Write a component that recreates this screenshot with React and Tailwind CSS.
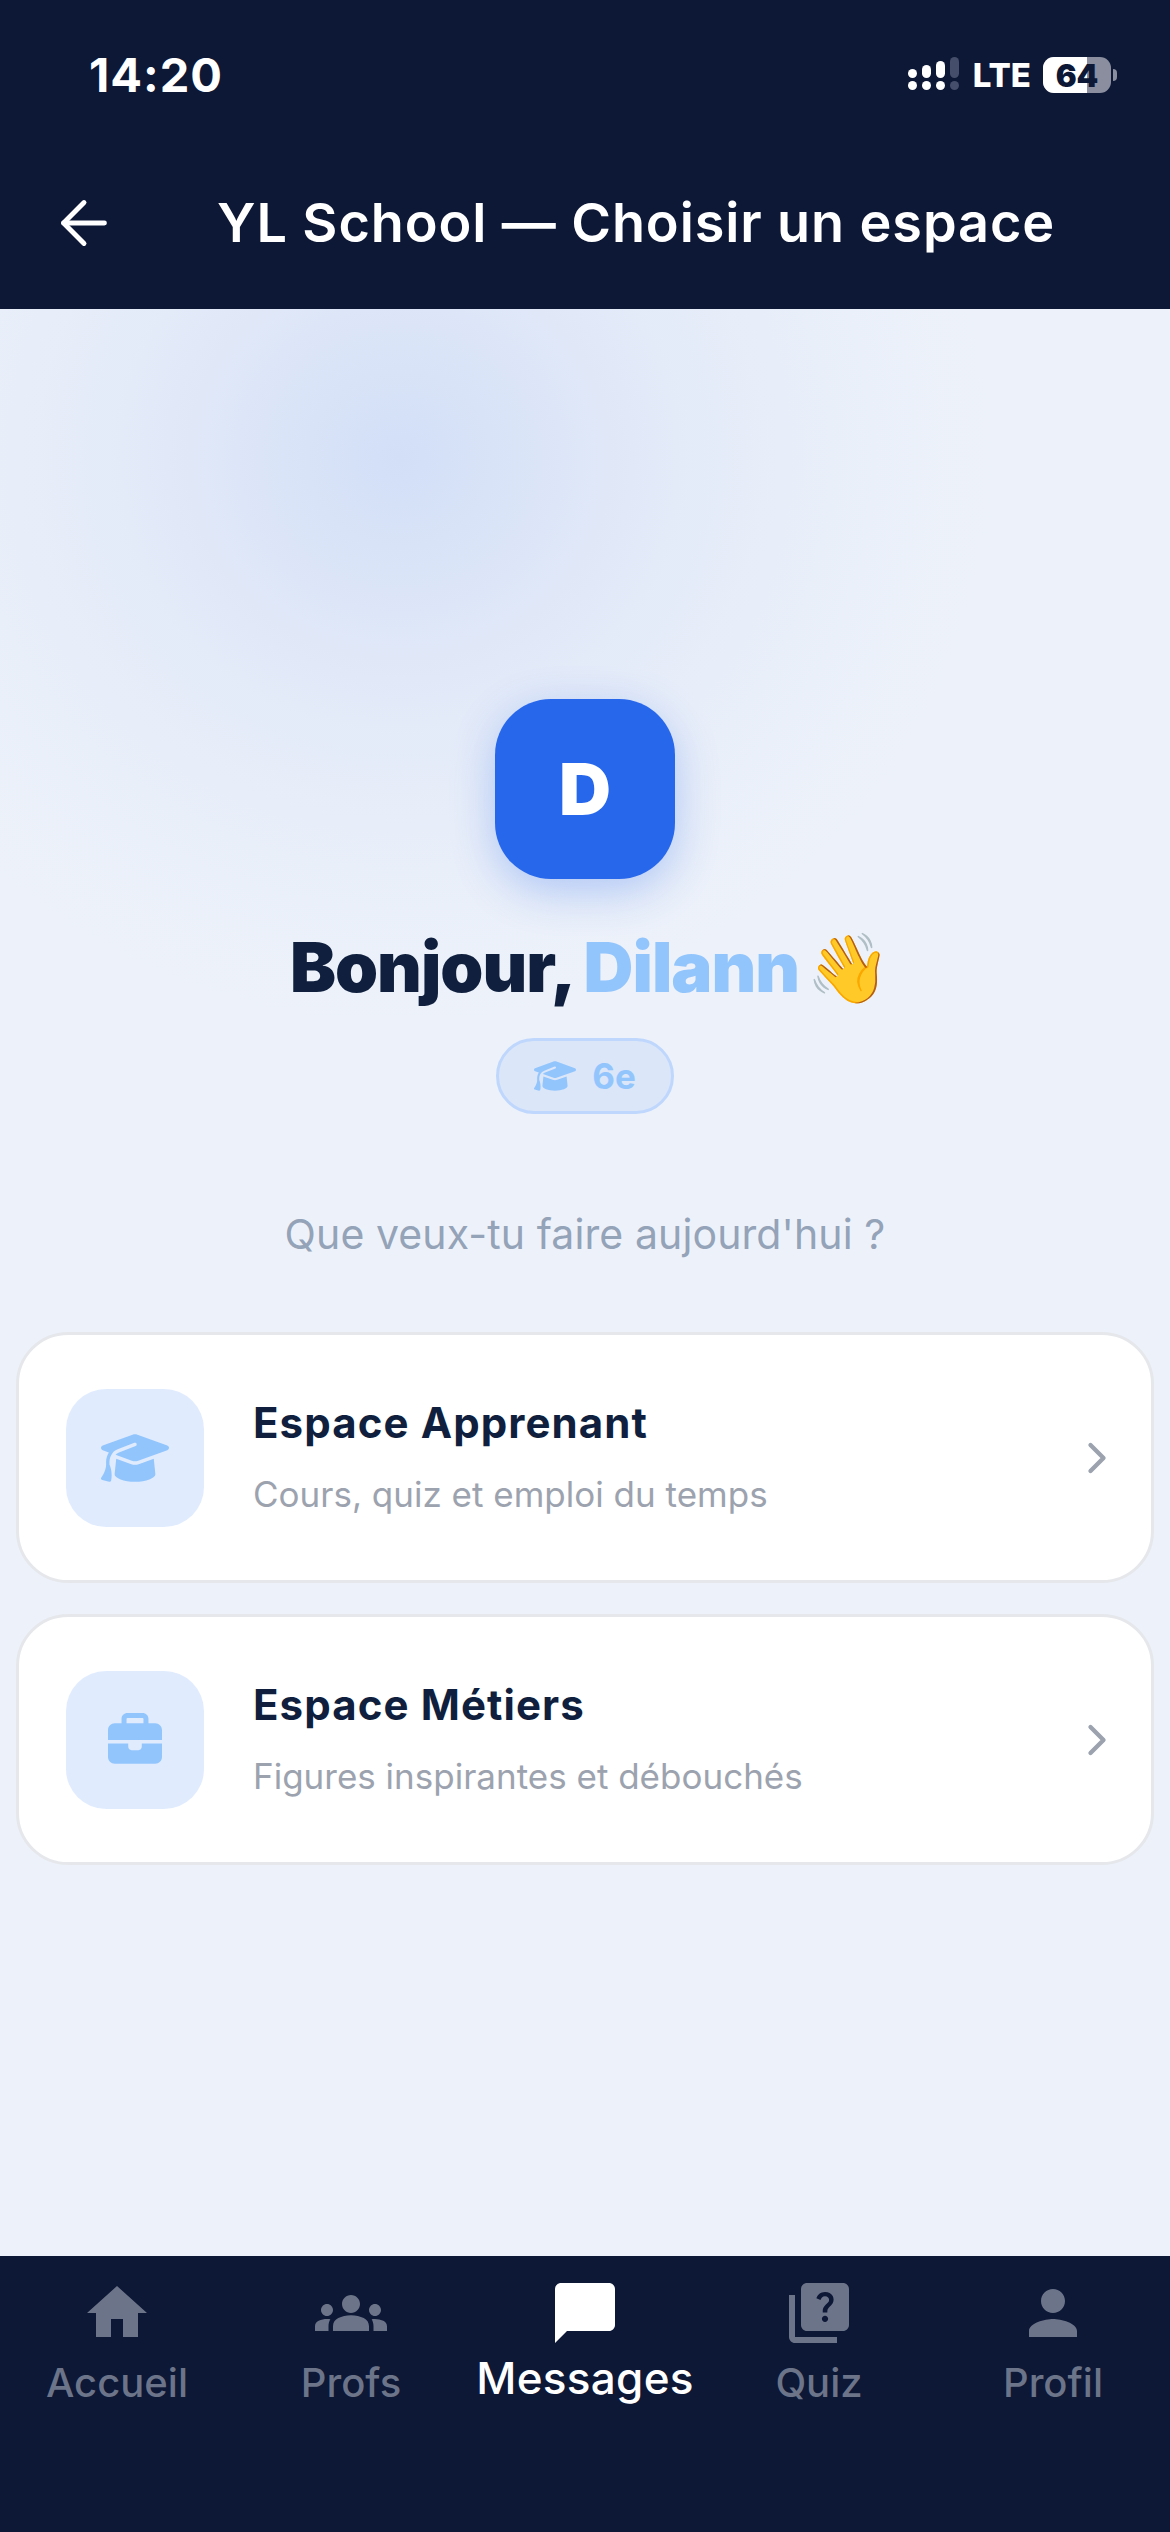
import { ArrowLeft, ChevronRight } from 'lucide-react';
import { FaBriefcase, FaGraduationCap } from 'react-icons/fa6';
import { MdChatBubble, MdGroups, MdHome, MdPerson, MdQuiz } from 'react-icons/md';

const tabs = [
    { label: 'Accueil', Icon: MdHome },
    { label: 'Profs', Icon: MdGroups },
    { label: 'Messages', Icon: MdChatBubble, active: true },
    { label: 'Quiz', Icon: MdQuiz },
    { label: 'Profil', Icon: MdPerson },
];

const spaces = [
    { title: 'Espace Apprenant', text: 'Cours, quiz et emploi du temps', Icon: FaGraduationCap, iconSize: 68 },
    { title: 'Espace Métiers', text: 'Figures inspirantes et débouchés', Icon: FaBriefcase, iconSize: 54 },
];

const StatusIcons = () => (
    <div className="flex items-center">
        <svg width="52" height="36" viewBox="0 0 52 36">
            <g fill="#fff">
                <rect x="0" y="12" width="9" height="9" rx="4.5" />
                <rect x="0" y="24" width="9" height="9" rx="4.5" />
                <rect x="14" y="8" width="9" height="13" rx="4.5" />
                <rect x="14" y="24" width="9" height="9" rx="4.5" />
                <rect x="28" y="4" width="9" height="17" rx="4.5" />
                <rect x="28" y="24" width="9" height="9" rx="4.5" />
            </g>
            <g fill="#454e6a">
                <rect x="42" y="0" width="9" height="21" rx="4.5" />
                <rect x="42" y="24" width="9" height="9" rx="4.5" />
            </g>
        </svg>
        <span className="ml-[13px] text-[33px] leading-none font-extrabold text-white">LTE</span>
        <div className="ml-[12px] flex items-center">
            <div className="relative flex h-[36px] w-[68px] items-center justify-center overflow-hidden rounded-[11px] bg-[#8a8e9e]">
                <div className="absolute inset-y-0 left-0 w-[44px] bg-white" />
                <span className="relative text-[31px] leading-none font-black text-[#0d1736]">64</span>
            </div>
            <div className="ml-[2px] h-[12px] w-[4px] rounded-r-full bg-[#8a8e9e]" />
        </div>
    </div>
);

const App = () => {
    return (
        <div className="flex h-[2532px] w-[1170px] flex-col bg-[#edf2fa] font-['Inter',sans-serif]">
            {/* Header */}
            <header className="h-[309px] shrink-0 bg-[#0d1736]">
                <div className="flex items-center justify-between pt-[52px] pr-[53px] pl-[89px]">
                    <span className="text-[47px] leading-[46px] font-bold tracking-[1px] text-white">14:20</span>
                    <StatusIcons />
                </div>
                <div className="mt-[90px] flex items-center pl-[49px]">
                    <ArrowLeft size={70} strokeWidth={1.7} className="text-white" />
                    <h1 className="ml-[98px] text-[54px] leading-[64px] font-semibold tracking-[0.9px] text-white">YL School — Choisir un espace</h1>
                </div>
            </header>

            {/* Body */}
            <main className="relative flex-1 overflow-hidden">
                <div className="absolute top-[-420px] left-[-200px] h-[1140px] w-[1200px] bg-[radial-gradient(closest-side,#d2dff7_0%,#e0e8f8_35%,#e8eef9_65%,#edf2fa_100%)]" />
                <div className="relative flex flex-col items-center pt-[390px]">
                    <div className="flex h-[180px] w-[180px] items-center justify-center rounded-[56px] bg-[#2767ec] shadow-[0_12px_44px_rgba(39,103,236,0.3)]">
                        <span className="text-[72px] leading-none font-black text-white">D</span>
                    </div>
                    <div className="mt-[44px] flex h-[88px] items-center pl-[10px] text-[69px] leading-[88px] font-black tracking-[-1px]">
                        <span className="text-[#0f1f3d]">Bonjour,</span>
                        <span className="ml-[8px] text-[#93c5fd]">Dilann</span>
                        <span className="ml-[7px] text-[68px]">👋</span>
                    </div>
                    <div className="mt-[27px] flex h-[76px] w-[178px] items-center justify-center gap-[16px] rounded-full border-[3px] border-[#bfd7fc] bg-[#dbe6f9]">
                        <FaGraduationCap size={42} className="text-[#93c5fd]" />
                        <span className="text-[35px] leading-none font-bold text-[#93c5fd]">6e</span>
                    </div>
                    <p className="mt-[94px] text-[41px] leading-[52px] tracking-[0.1px] text-[#94a3b8]">Que veux-tu faire aujourd'hui ?</p>

                    <div className="mt-[72px] flex w-full flex-col gap-[31px] px-[16px]">
                        {spaces.map(({ title, text, Icon, iconSize }) => (
                            <div key={title} className="flex h-[251px] items-center rounded-[52px] border-[3px] border-[#e5e7eb] bg-white pr-[28px] pl-[47px]">
                                <div className="flex h-[138px] w-[138px] shrink-0 items-center justify-center rounded-[40px] bg-[#e0ecfe]">
                                    <Icon size={iconSize} className="text-[#93c5fd]" />
                                </div>
                                <div className="ml-[49px] flex-1 pb-[5px]">
                                    <p className="text-[42px] leading-[52px] font-bold tracking-[1.1px] text-[#0f1f3d]">{title}</p>
                                    <p className="mt-[25px] text-[35px] leading-[40px] text-[#9ca3af]">{text}</p>
                                </div>
                                <ChevronRight size={52} strokeWidth={2} className="text-[#9ca3af]" />
                            </div>
                        ))}
                    </div>
                </div>
            </main>

            {/* Tab bar */}
            <nav className="grid h-[276px] shrink-0 grid-cols-5 bg-[#0d1736] pt-[21px]">
                {tabs.map(({ label, Icon, active }) => (
                    <div key={label} className="flex flex-col items-center">
                        <Icon size={72} className={active ? 'text-white' : 'text-[#6b7488]'} />
                        {active ? (
                            <span className="mt-[2px] text-[44px] leading-[54px] font-medium tracking-[0.3px] text-white">{label}</span>
                        ) : (
                            <span className="mt-[9px] text-[40px] leading-[50px] font-medium text-[#6b7488]">{label}</span>
                        )}
                    </div>
                ))}
            </nav>
        </div>
    );
};

export default App;
